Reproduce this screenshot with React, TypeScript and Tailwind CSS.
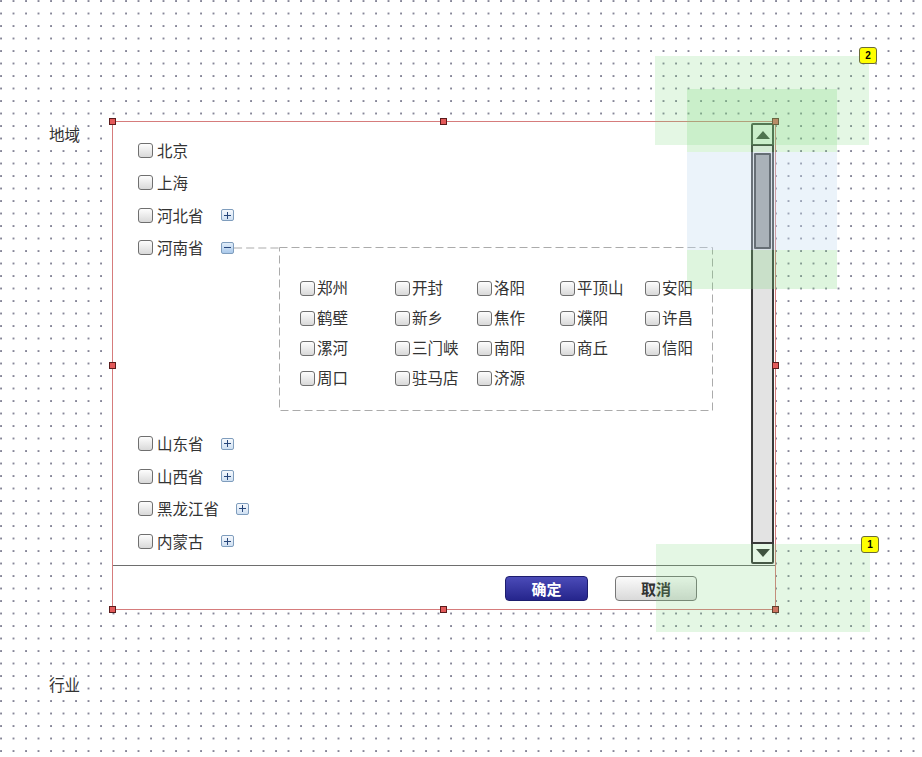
import React from "react";

const font = "font-['Noto_Sans_CJK_SC','Noto_Sans',sans-serif]";

function Check() {
  return (
    <span className="inline-block w-[15px] h-[15px] shrink-0 rounded-[3px] border border-[#6f6f6f] bg-[linear-gradient(#fdfdfd,#d9d9d9)]" />
  );
}

function Toggle({ open = false }: { open?: boolean }) {
  return (
    <span
      className={
        "relative inline-flex w-[13px] h-[12px] shrink-0 items-center justify-center rounded-[2px] border border-[#7f9dbd] " +
        (open ? "bg-[linear-gradient(#e2eefa,#a9c8ea)]" : "bg-[linear-gradient(#f6f9fd,#cfe0f2)]")
      }
    >
      <span className="absolute w-[7px] h-[1px] bg-[#27467a]" />
      {!open && <span className="absolute w-[1px] h-[7px] bg-[#27467a]" />}
    </span>
  );
}

function Row({ name, expand }: { name: string; expand?: boolean }) {
  return (
    <div className="flex items-center h-[32.5px]">
      <Check />
      <span className="ml-[4px]">{name}</span>
      {expand && (
        <span className="ml-[17px] flex">
          <Toggle />
        </span>
      )}
    </div>
  );
}

const cities = [
  ["郑州", "开封", "洛阳", "平顶山", "安阳"],
  ["鹤壁", "新乡", "焦作", "濮阳", "许昌"],
  ["漯河", "三门峡", "南阳", "商丘", "信阳"],
  ["周口", "驻马店", "济源"],
];

function Handle({ className }: { className: string }) {
  return <span className={"absolute w-[7px] h-[7px] bg-[#e35a5a] border border-[#5a1c1c] " + className} />;
}

function Badge({ n, className }: { n: string; className: string }) {
  return (
    <span
      className={
        "absolute w-[18px] h-[17px] flex items-center justify-center rounded-[3px] border border-[#6b6b3a] bg-[#ffff00] text-[10px] font-bold text-black font-['Liberation_Sans',sans-serif] " +
        className
      }
    >
      {n}
    </span>
  );
}

export default function App() {
  return (
    <div
      className={
        "relative w-[922px] h-[757px] overflow-hidden bg-white text-[#333] text-[15.5px] leading-none " +
        "bg-[radial-gradient(circle_at_1px_1px,#6c6c82_0.6px,transparent_1px)] bg-size-[12.5px_12.5px] " +
        font
      }
    >
      <div className="pl-[49px] pt-[121px]">
        <div className="flex">
          <div className="w-[63px] pt-[6px]">地域</div>

          <div className="relative w-[664px] h-[489px] border border-[#d67c7c] bg-white flex flex-col">
            <div className="flex h-[443px]">
              <div className="flex-1 pl-[25px] pt-[12px]">
                <Row name="北京" />
                <Row name="上海" />
                <Row name="河北省" expand />

                <div className="flex items-start">
                  <div className="flex items-center h-[32.5px] w-[141px]">
                    <Check />
                    <span className="ml-[4px]">河南省</span>
                    <span className="ml-[17px] flex">
                      <Toggle open />
                    </span>
                    <svg className="flex-1" height="2" viewBox="0 0 45 2" preserveAspectRatio="none">
                      <line x1="0" y1="1" x2="45" y2="1" stroke="#ababab" strokeDasharray="8 4" />
                    </svg>
                  </div>
                  <div className="relative w-[434px] h-[164px] mt-[15.5px] pl-[21px] pt-[26px]">
                    <svg className="absolute inset-0" width="434" height="164">
                      <rect x="0.5" y="0.5" width="433" height="163" fill="none" stroke="#ababab" strokeDasharray="8 4" />
                    </svg>
                    {cities.map((row, i) => (
                      <div key={i} className="grid grid-cols-[95px_82px_83px_85px_auto] h-[30px]">
                        {row.map((c) => (
                          <div key={c} className="flex items-center">
                            <Check />
                            <span className="ml-[2px]">{c}</span>
                          </div>
                        ))}
                      </div>
                    ))}
                  </div>
                </div>

                <div className="mt-[16.5px]">
                  <Row name="山东省" expand />
                  <Row name="山西省" expand />
                  <Row name="黑龙江省" expand />
                  <Row name="内蒙古" expand />
                </div>
              </div>

              <div className="mt-[1px] mb-[1px] mr-[1px] w-[23px] flex flex-col border-2 border-[#3a3a3a] rounded-[2px] bg-[#e3e3e3]">
                <div className="h-[21px] bg-white border-b-2 border-[#3a3a3a] flex items-center justify-center">
                  <span className="w-0 h-0 border-x-[7px] border-x-transparent border-b-[8px] border-b-[#333]" />
                </div>
                <div className="h-[7px] bg-[#f2f2f2]" />
                <div className="flex-1 px-[1px]">
                  <div className="h-[96px] bg-[#9c9c9c] border-2 border-[#333] rounded-[1px]" />
                </div>
                <div className="h-[20px] bg-white border-t-2 border-[#3a3a3a] flex items-center justify-center">
                  <span className="w-0 h-0 border-x-[7px] border-x-transparent border-t-[8px] border-t-[#333]" />
                </div>
              </div>
            </div>

            <div className="h-[1px] bg-[#6e6e6e]" />

            <div className="flex-1 flex justify-end items-start pt-[10px] pr-[78px] gap-[27px]">
              <button className="w-[83px] h-[25px] rounded-[4px] border border-[#1d1d6e] bg-[linear-gradient(#4b4bb8,#25258c)] text-white font-bold text-[15px]">
                确定
              </button>
              <button className="w-[82px] h-[25px] rounded-[4px] border border-[#777] bg-[linear-gradient(#fbfbfb,#d9d9d9)] text-[#333] font-bold text-[15px]">
                取消
              </button>
            </div>

            <Handle className="-left-[4px] -top-[4px]" />
            <Handle className="left-[327px] -top-[4px]" />
            <Handle className="-right-[4px] -top-[4px]" />
            <Handle className="-left-[4px] top-[240px]" />
            <Handle className="-right-[4px] top-[240px]" />
            <Handle className="-left-[4px] -bottom-[4px]" />
            <Handle className="left-[327px] -bottom-[4px]" />
            <Handle className="-right-[4px] -bottom-[4px]" />
          </div>
        </div>

        <div className="mt-[67px]">行业</div>
      </div>

      {/* annotation highlights */}
      <div className="absolute left-[655px] top-[56px] w-[214px] h-[89px] bg-[#7ad97a]/20" />
      <div className="absolute left-[687px] top-[89px] w-[150px] h-[63px] bg-[#7ad97a]/25" />
      <div className="absolute left-[687px] top-[152px] w-[150px] h-[98px] bg-[#c7dcf0]/35" />
      <div className="absolute left-[687px] top-[250px] w-[150px] h-[39px] bg-[#7ad97a]/25" />
      <div className="absolute left-[656px] top-[544px] w-[214px] h-[88px] bg-[#7ad97a]/20" />
      <Badge n="2" className="left-[859px] top-[47px]" />
      <Badge n="1" className="left-[861px] top-[536px]" />
    </div>
  );
}
